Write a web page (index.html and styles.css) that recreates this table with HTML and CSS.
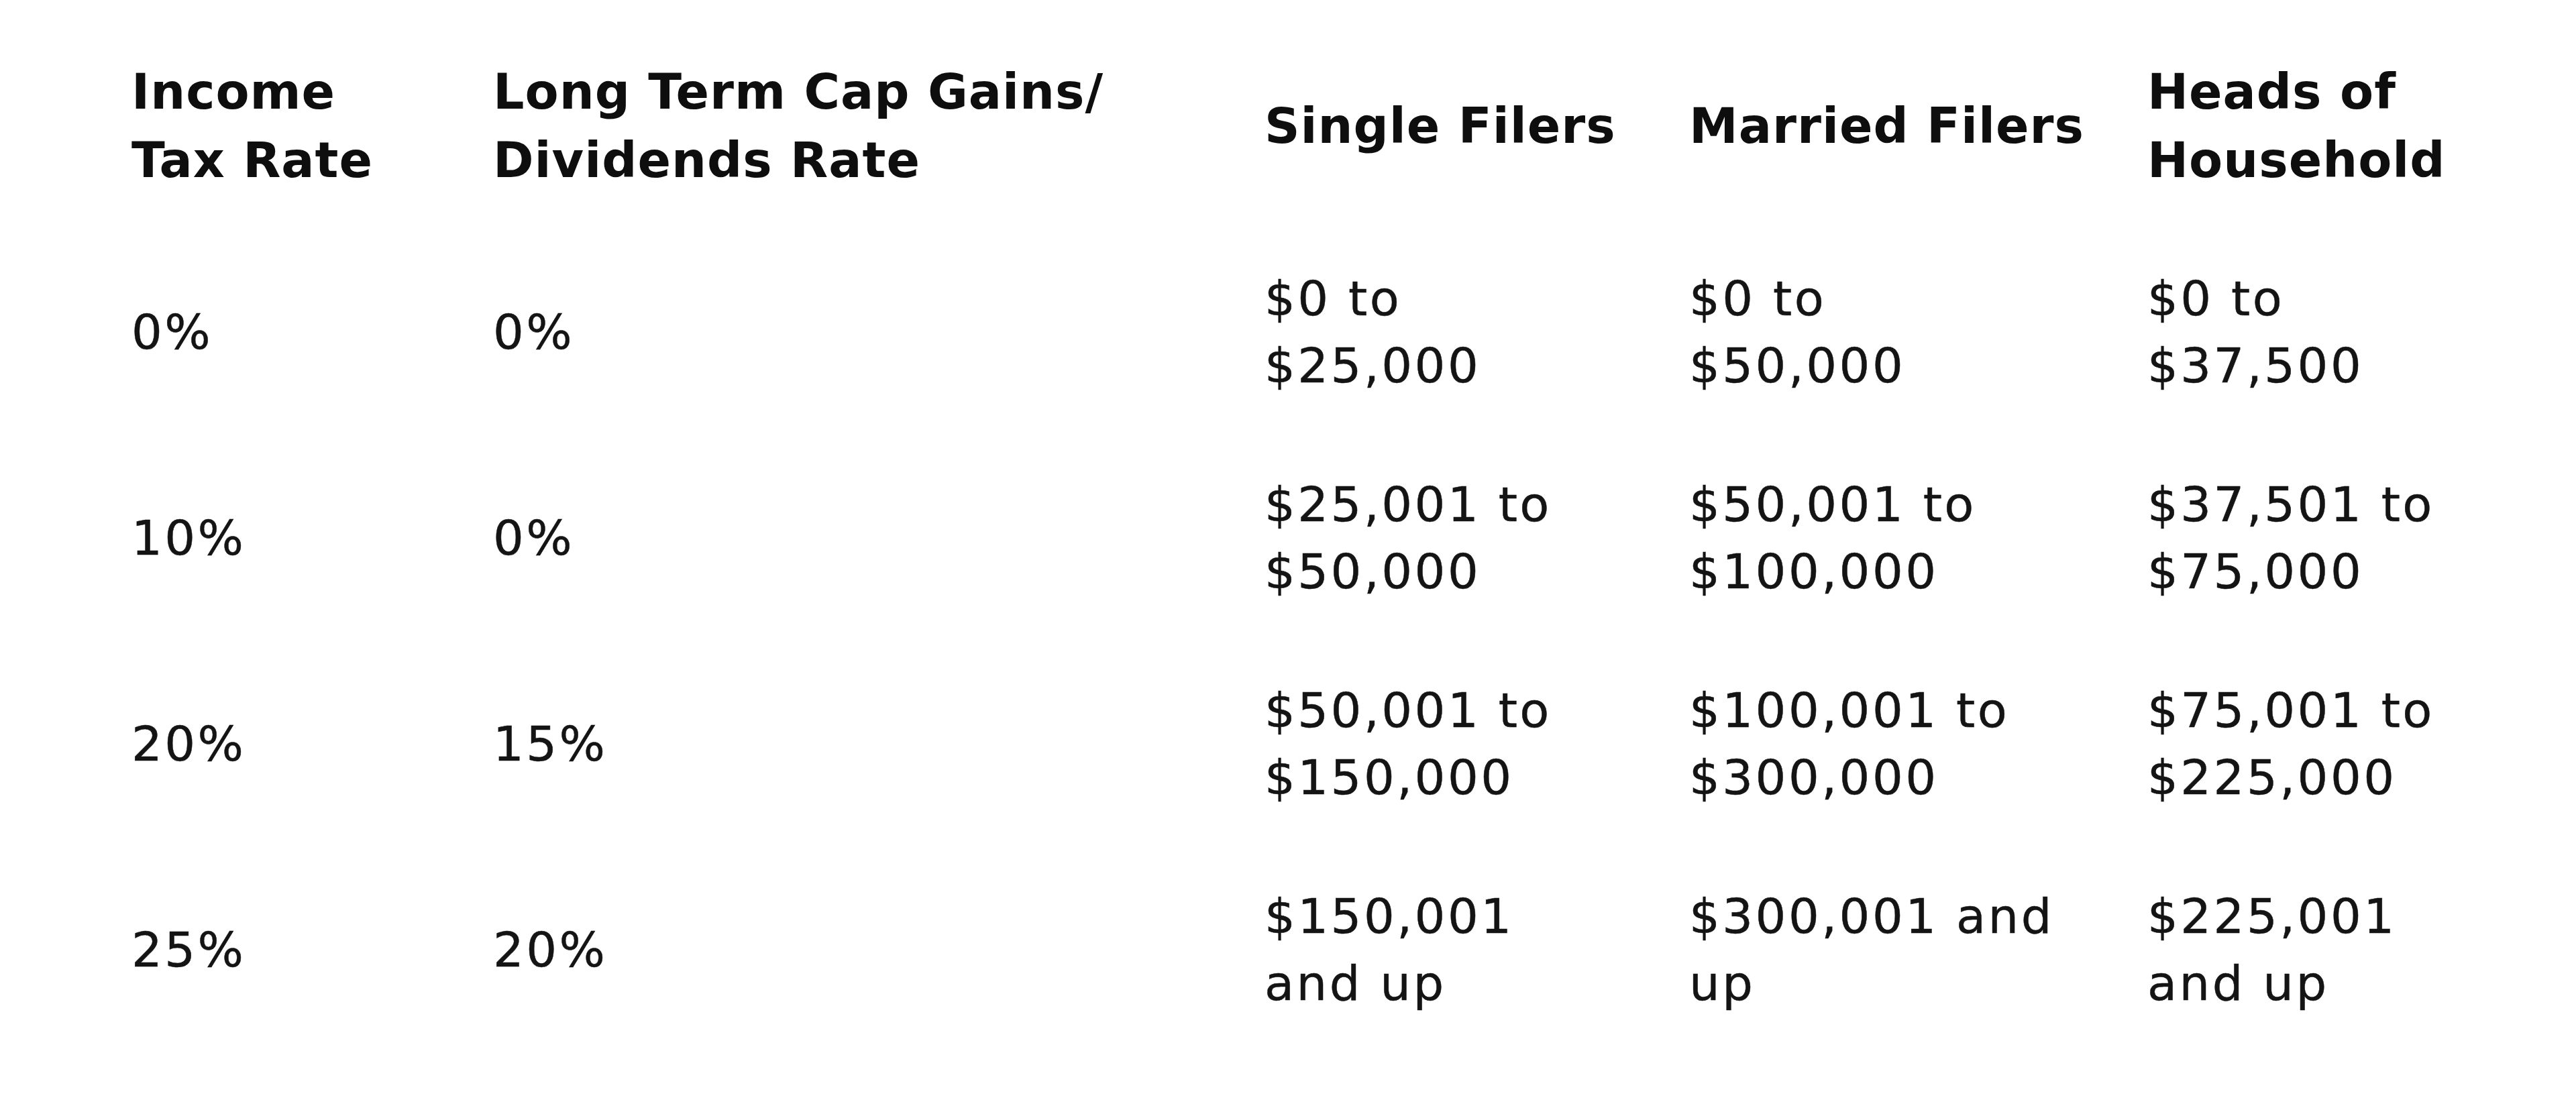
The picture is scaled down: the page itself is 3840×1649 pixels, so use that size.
FILE: index.html
```html
<!DOCTYPE html>
<html lang="en">
<head>
<meta charset="utf-8">
<title>Tax Rates</title>
<link rel="stylesheet" href="styles.css">
</head>
<body>
<div class="page">
  <div class="rates">
    <div class="cell head">Income<br>Tax Rate</div>
    <div class="cell head">Long Term Cap Gains/<br>Dividends Rate</div>
    <div class="cell head">Single Filers</div>
    <div class="cell head">Married Filers</div>
    <div class="cell head">Heads of<br>Household</div>

    <div class="cell">0%</div>
    <div class="cell">0%</div>
    <div class="cell">$0 to<br>$25,000</div>
    <div class="cell">$0 to<br>$50,000</div>
    <div class="cell">$0 to<br>$37,500</div>

    <div class="cell">10%</div>
    <div class="cell">0%</div>
    <div class="cell">$25,001 to<br>$50,000</div>
    <div class="cell">$50,001 to<br>$100,000</div>
    <div class="cell">$37,501 to<br>$75,000</div>

    <div class="cell">20%</div>
    <div class="cell">15%</div>
    <div class="cell">$50,001 to<br>$150,000</div>
    <div class="cell">$100,001 to<br>$300,000</div>
    <div class="cell">$75,001 to<br>$225,000</div>

    <div class="cell">25%</div>
    <div class="cell">20%</div>
    <div class="cell">$150,001<br>and up</div>
    <div class="cell">$300,001 and<br>up</div>
    <div class="cell">$225,001<br>and up</div>
  </div>
</div>
</body>
</html>
```

FILE: styles.css
```css
html, body {
  margin: 0;
  padding: 0;
  background: #ffffff;
}

.page {
  padding: 34px 0 0 196px;
  min-height: 1649px;
  box-sizing: border-box;
}

.rates {
  display: grid;
  grid-template-columns: 539px 1150px 633px 683px 500px;
  grid-auto-rows: 307px;
  align-items: center;
  font-family: "DejaVu Sans", "Liberation Sans", sans-serif;
  color: #141414;
}

.cell {
  font-size: 72px;
  line-height: 100px;
  letter-spacing: 3.5px;
  white-space: nowrap;
  -webkit-text-stroke: 0.5px #141414;
}

.head {
  font-size: 73px;
  line-height: 102px;
  font-weight: bold;
  letter-spacing: 1px;
  color: #0e0e0e;
  -webkit-text-stroke: 0;
}
```
